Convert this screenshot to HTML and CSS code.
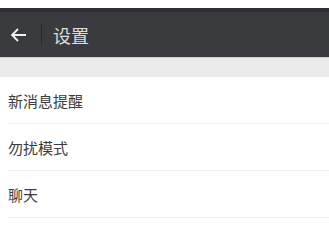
FILE: index.html
```html
<!DOCTYPE html>
<html lang="zh">
<head>
<meta charset="utf-8">
<link rel="stylesheet" href="styles.css">
</head>
<body>
<div class="page">
  <div class="top-gap"></div>
  <div class="status"></div>
  <header class="header">
    <svg class="back" width="17" height="14" viewBox="0 0 17 14">
      <path d="M16 7H2M8 1L2 7l6 6" fill="none" stroke="#f2f2f2" stroke-width="1.8"/>
    </svg>
    <span class="divider"></span>
    <span class="title">设置</span>
  </header>
  <div class="shade"></div>
  <div class="band"></div>
  <ul class="list">
    <li class="item">新消息提醒</li>
    <li class="item">勿扰模式</li>
    <li class="item">聊天</li>
  </ul>
</div>
</body>
</html>
```
FILE: styles.css
```css
html, body {
  margin: 0;
  padding: 0;
  background: #ffffff;
}
.page {
  font-family: "Noto Sans CJK SC", "Noto Sans", sans-serif;
}
.top-gap {
  height: 8px;
  background: #ffffff;
}
.status {
  height: 4px;
  background: #2e2f32;
}
.header {
  height: 45px;
  background: #3a3b3f;
  display: flex;
  align-items: center;
  padding-left: 10px;
}
.back {
  display: block;
  flex: none;
}
.divider {
  width: 1px;
  height: 23px;
  background: #2b2c2f;
  margin-left: 14px;
  flex: none;
}
.title {
  margin-left: 11px;
  font-size: 18px;
  color: #dedede;
  line-height: 1;
}
.shade {
  height: 1px;
  background: #cfcfcf;
}
.band {
  height: 19px;
  background: #ebebeb;
}
.list {
  list-style: none;
  margin: 0;
  padding: 0 0 0 8px;
}
.item {
  height: 46px;
  display: flex;
  align-items: center;
  border-bottom: 1px solid #eeeeee;
  font-size: 15px;
  color: #3c3c3c;
}
```
